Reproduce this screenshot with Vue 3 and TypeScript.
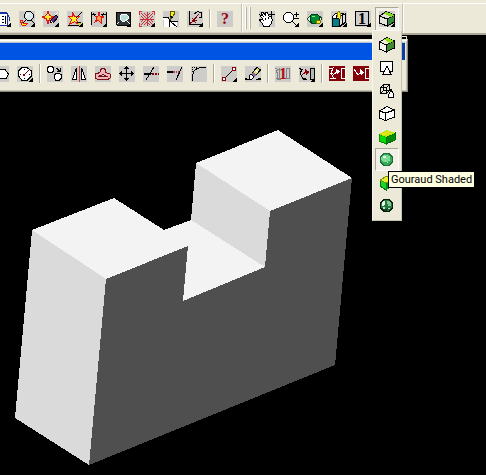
<script setup lang="ts">
import { ref } from 'vue'

/** One stroke or filled area of a 16x16 icon: path data, fill, stroke. */
type Shape = [d: string, fill: string, stroke?: string]

interface Tool {
  name: string
  plate?: boolean
  more?: boolean
  gap?: boolean
  glyph?: string
  glyphColor?: string
  shapes: Shape[]
}

const K = '#000'
const W = '#fff'
const N = 'none'
const R = '#e01818'
const D = '#850008'
const Y = '#ffee20'
const G = '#b8b8b8'

const star = 'M5.5 1.5L7.5 5.5L12.5 5.5L9.5 8.5L11.5 13.5L7.5 10.5L2.5 13.5L4.5 8.5L1.5 5.5H5.5Z'
const disc = 'M5 1.5H10L13.5 5V10L10 13.5H5L1.5 10V5Z'

const standardTools: Tool[] = [
  { name: 'Element attributes', more: true, shapes: [
    ['M1 2H12V14H1Z', W, '#1830a0'], ['M5 1H12V3H5Z', '#1830a0'],
    ['M6.5 5.5H8.5M6.5 8.5H8.5M6.5 11.5H8.5M10.5 5V13', N, K], ['M12.5 3.5L14.5 6.5V9.5', N, '#1830a0']] },
  { name: 'View element', plate: true, more: true, shapes: [
    ['M1 9L3 14H7L9 12H4L3 9Z', Y, R], ['M7.5 .5H11.5L14.5 3.5V6.5L11.5 9.5H8.5L5.5 6.5V3.5Z', '#dceaea', K],
    ['M8 3H10M7.5 4V6', N, W], ['M6.5 9.5L4 12M12 9L15 12', N, K]] },
  { name: 'Delete element', plate: true, more: true, shapes: [
    ['M5 .5L6.5 4.5L10.5 6L6.5 8L5 12.5L3.5 8L-.5 6L3.5 4.5Z', Y, R],
    ['M8 9L13 4L15 6L10 12L7 11Z', '#672888', K], ['M12 4L15 1', N, W], ['M8 10L10 12', N, W]] },
  { name: 'Create element', plate: true, more: true, shapes: [
    [star, Y, R], ['M15 1L9 7M1 14.5H12M10 11.5H14', N, K], ['M11 12H14V14H11Z', '#d8d020']] },
  { name: 'Dimension element', plate: true, more: true, shapes: [
    ['M.5 1V14M15 1V12M1 3.5H5M10 3.5H15M2 2L4 5M13 2L11 5', N, K],
    ['M8 1.5L9 5L13 6L10 7L10 12L7 9L4 11L6 7L4 5H7Z', '#ff9b42', R]] },
  { name: 'Fence preview', more: true, shapes: [
    ['M1 1H15V14H2L1 12Z', '#303638', K], ['M7 3H11L13 5V8L10 10H7L5 8V5Z', '#b9dfda', W],
    ['M4 11L2 13', N, W], ['M11 9L15 13', N, W]] },
  { name: 'Explode', plate: true, more: true, shapes: [
    ['M8 1V15M1 8H15M2 2L14 14M14 2L2 14M5 2L8 5L11 2M5 14L8 11L11 14M2 5L5 8L2 11M14 5L11 8L14 11', N, '#ce3038'],
    ['M0.5 1V4M3 .5H0M15.5 1V4M13 .5H16M.5 12V15.5H3', N, '#ce3038']] },
  { name: 'Place note', plate: true, shapes: [
    ['M0 7H6L8 11H14V16H1V11Z', W], ['M0 6.5H5L8 11L6 9V15.5M8 10.5H15M8 11L14 16', N, K],
    ['M7 5L8 0H11L12 2L9 7L7 9Z', Y, '#555500'], ['M7 5L10 7', N, K]] },
  { name: 'Measure angle', plate: true, more: true, shapes: [
    ['M2.5 0V13.5H15', N, K], ['M3 13L12 3M3 12L10 9M5 7L9 12', N, D],
    ['M7.5 3L10.5 .5L14.5 2V6M12 6H15', N, K]] },
  { name: 'Help', plate: true, gap: true, glyph: '?', glyphColor: '#9c0010', shapes: [] },
]

const viewTools: Tool[] = [
  { name: 'Pan view', plate: true, shapes: [
    ['M1 4L4 5L2 2L4 1L7 5L6 2L8 1L10 5L12 6L13.5 9L12 13L10 15.5H5L3 12L.5 9L2 8L4 9Z', W, K],
    ['M12.5 0V6M10 3.5H16', N, K], ['M6 7V9M9 6V8', N, K]] },
  { name: 'Zoom in or out', more: true, shapes: [
    ['M3.5 1.5H7.5L10.5 4.5V8.5L7.5 11.5H3.5L.5 8.5V4.5Z', W, K], ['M9 10L14 15', N, K],
    ['M13.5 1V6M11 3.5H16M11 7.5H16', N, K]] },
  { name: 'Rotate view', plate: true, more: true, shapes: [
    ['M0 8L3 5H13L15 8L12 12H4Z', '#e9eee9', '#174520'], ['M5 3H10L12 5V9L9 12H5L3 9V5Z', '#008c30', '#003814'],
    ['M5 5H8', N, '#6aff82'], ['M10 9H13L14 11L12 13L9 12Z', Y, '#7d7300']] },
  { name: 'Camera', plate: true, more: true, shapes: [
    ['M1 6L5 2H12L14 5V12L10 15H1Z', W, K], ['M1 7H8V15H1Z', '#087c83', K],
    ['M8 6L14 3V11L9 15Z', '#e2e2e2', K], ['M6 6V2L8 0L9 2V8', Y, '#8c8200'], ['M5 4V7M11 3V12', N, K]] },
  { name: 'View display mode 1', plate: true, more: true, glyph: '1', glyphColor: K, shapes: [
    ['M.5 .5H13.5V14.5H.5Z', '#cfcfcf', K]] },
]

const renderTool: Tool = { name: 'Render', plate: true, more: true, shapes: [
  ['M.5 5L8 8V15L.5 12Z', '#e4e4dc', K], ['M8 8L15.5 4V11L8 15Z', '#35883c', K],
  ['M.5 5L7 .5L15.5 4L8 8Z', '#dfe0d4', K], ['M5 2.5L7 .5L15.5 4L11.5 6Z', '#84d61c']] }

const manipulateTools: Tool[] = [
  { name: 'Place polygon', plate: true, shapes: [['M6 3.5H12L15.5 8L13.5 12.5H6L3 8Z', W, K]] },
  { name: 'Place circle', plate: true, more: true, shapes: [
    ['M5 1.5H10L14.5 5V10L10 14.5H5L1.5 10V5Z', W, K], ['M7 9L12 4', N, D], ['M6 8H8V10H6Z', D],
    ['M7.5 3V4M7.5 12V13M3 8.5H4M12 8.5H13', N, K]] },
  { name: 'Copy element', plate: true, gap: true, shapes: [
    ['M2 .5H5L6.5 2V5L5 6.5H2L.5 5V2Z', W, K], ['M9 7.5H12L14.5 9V12L12 14.5H9L7.5 12V9Z', W, K],
    ['M9 2L13 5M10 5.5H13.5V2', N, K]] },
  { name: 'Mirror element', plate: true, shapes: [
    ['M5.5 2V13.5H1.5Z', W, K], ['M10.5 2V13.5H14.5Z', W, K], ['M8 0V16', N, '#c43d43']] },
  { name: 'Move parallel', plate: true, shapes: [
    ['M5.5 4L7 2.5H9L10.5 4V6.5L15 8V12L13 13.5H3L.5 12V8L5 6.5Z', '#efb4b7', '#741018'],
    ['M3.5 10.5L8 8.5L12.5 10.5Z', '#cfcfcf', '#741018']] },
  { name: 'Move element', plate: true, shapes: [
    ['M7.5 1V15M1 7.5H15', N, K], ['M7.5 0L10 3H5ZM7.5 15L10 12H5ZM0 7.5L3 5V10ZM15 7.5L12 5V10Z', K]] },
  { name: 'Trim element', plate: true, shapes: [
    ['M1 7.5H9M3 14L11 1', N, K], ['M1 8.5H8', N, K], ['M9 7H11V9H9ZM12 7H14V9H12ZM15 7H16V9H15Z', D]] },
  { name: 'Extend to intersection', plate: true, shapes: [
    ['M0 5.5H6M0 6.5H6M9 14L15 1', N, K], ['M6 5H8V7H6ZM9 5H10V7H9ZM11 5H12V7H11Z', '#a83f45']] },
  { name: 'Construct fillet', plate: true, shapes: [
    ['M1.5 15V9L3 5L6 2.5L10 1.5H15', N, K], ['M1 1H2V2H1ZM3 1H4V2H3ZM5 1H6V2H5ZM1 3H2V4H1ZM1 5H2V6H1Z', K]] },
  { name: 'Modify element', plate: true, more: true, gap: true, shapes: [
    ['M4 12L12 4', N, K], ['M1.5 11.5H4.5V14.5H1.5Z', W, D], ['M11.5 1.5H14.5V4.5H11.5Z', W, D]] },
  { name: 'Partial delete', plate: true, shapes: [
    ['M0 13.5H4M11 13.5H16M0 12.5H2M13 12.5H16', N, K], ['M7 7L12 1.5L15.5 4L10 10Z', '#e9df5c', K],
    ['M6 8L8 6L11 9L9 11Z', '#8d6c98'], ['M4 10L6 8L9 11L7 13H4Z', W, K], ['M10 4L13 6', N, W]] },
  { name: 'Group 1', plate: true, gap: true, glyph: '1', glyphColor: '#b01018', shapes: [
    ['M1 5L4 3V12H2L3 8Z', N, '#858585'], ['M11.5 2.5H14.5V12.5H11.5Z', N, '#858585'],
    ['M0 2H2M1 4H3M2 13H6', N, '#858585']] },
  { name: 'Change group', plate: true, more: true, shapes: [
    ['M0 2L3 4L1 7L4 13H8M2 3H4M3 12H7', N, K], ['M11.5 2.5H15.5V13.5H11.5Z', G, K],
    ['M3 9L7 6', N, D], ['M6 3L11 6L7 9Z', D]] },
  { name: 'Attach reference', gap: true, shapes: [
    ['M0 0H16V15H0Z', D], ['M0 3L4 2L2 7L5 13M1 8L4 7M1 12H7', N, W],
    ['M4 9L8 6', N, W], ['M7 3L11 5L8 9Z', W], ['M12.5 2.5H16V12.5H12.5Z', D, W]] },
  { name: 'Move reference', shapes: [
    ['M0 0H16V15H0Z', D], ['M1 3L5 9L9 6', N, W], ['M7 3L11 6L8 9Z', W], ['M16 2.5H12.5V12.5H16', N, W]] },
]

const renderModes: Tool[] = [
  { name: 'Rendered view', shapes: [
    ['M.5 5L7 8V15L.5 12Z', '#f4f4ea', K], ['M7 8L15.5 4V11L7 15Z', '#3f8a30', K],
    ['M.5 5L8 .5L15.5 4L7 8Z', '#eff0d8', K], ['M5 2.5L8 .5L15.5 4L10.5 6Z', '#8fe010']] },
  { name: 'Cross section', shapes: [
    ['M1.5 1.5H13.5V11.5H1.5Z', W, K], ['M8 6L12 14.5H4Z', W, K], ['M8 6V8', N, K]] },
  { name: 'Wiremesh', shapes: [
    ['M1.5 4.5H7.5V10.5H1.5ZM4.5 1.5H10.5V7.5H4.5ZM1.5 4.5L4.5 1.5M7.5 4.5L10.5 1.5M1.5 10.5L4.5 7.5M7.5 10.5L10.5 7.5', N, K],
    ['M12 6.5L15 12L14 14.5H10L9.5 12Z', W, K]] },
  { name: 'Hidden line', shapes: [
    ['M.5 5L6.5 7V14.5L.5 12Z', W, K], ['M6.5 7L15.5 4V11L6.5 14.5Z', W, K], ['M.5 5L8 .5L15.5 4L6.5 7Z', W, K]] },
  { name: 'Filled hidden line', shapes: [
    ['M0 5L7 8V15L0 12Z', '#08dc08', '#168808'], ['M7 8L16 4V11L7 15Z', '#008b08', '#006b08'],
    ['M0 5L8 1L16 4L7 8Z', '#aeee00'], ['M3 4L10 7M6 3L13 5M3 6L11 2', N, '#f8df25']] },
  { name: 'Gouraud Shaded', shapes: [
    [disc, '#39a85c', '#187039'], ['M4 3H8L11 5V8L8 10H4L2 8V5Z', '#79da92'], ['M4 4H7V6H4Z', '#e7ffe9'],
    ['M6 8H7V9H6ZM8 6H9V7H8ZM10 8H11V9H10ZM8 10H9V11H8ZM10 4H11V5H10Z', '#9eeaad']] },
  { name: 'Phong Shaded', shapes: [
    ['M1 5L7 8V15L1 11Z', '#19d52c', '#096b13'], ['M7 8L15 4V11L7 15Z', '#008b22'], ['M1 5L8 1L15 4L7 8Z', '#e9eb32', '#779500']] },
  { name: 'Ray traced', shapes: [
    [disc, '#267740', '#021d0a'], ['M3 4L5 3H6V6L4 8H3Z', '#eaf6ea'],
    ['M8 3H10L12 5V8H9Z', '#7fc78e'], ['M3 10L6 11L10 10L8 13H5Z', '#123d20'],
    ['M4 9H6V11H4ZM9 10H11V11H9Z', '#b6e7bd']] },
]

const activeMode = ref('Gouraud Shaded')
</script>

<template>
  <main class="app">
    <header class="dock">
      <div class="bar bar-main" role="toolbar" aria-label="Standard">
        <button v-for="t in standardTools" :key="t.name" class="tool" :class="{ gap: t.gap }" :aria-label="t.name">
          <svg class="icon" :class="{ plate: t.plate }" viewBox="0 0 16 16">
            <path v-for="(s, i) in t.shapes" :key="i" :d="s[0]" :fill="s[1]" :stroke="s[2] ?? 'none'" />
            <text v-if="t.glyph" x="8" y="13" class="glyph" :fill="t.glyphColor">{{ t.glyph }}</text>
            <path v-if="t.more" d="M16 11V16H11Z" fill="#000" />
          </svg>
        </button>
      </div>
      <div class="bar bar-view" role="toolbar" aria-label="View control">
        <span class="grip"></span>
        <button v-for="t in viewTools" :key="t.name" class="tool" :aria-label="t.name">
          <svg class="icon" :class="{ plate: t.plate }" viewBox="0 0 16 16">
            <path v-for="(s, i) in t.shapes" :key="i" :d="s[0]" :fill="s[1]" :stroke="s[2] ?? 'none'" />
            <text v-if="t.glyph" x="7" y="13" class="glyph" :fill="t.glyphColor">{{ t.glyph }}</text>
            <path v-if="t.more" d="M16 11V16H11Z" fill="#000" />
          </svg>
        </button>
        <div class="split">
          <button class="tool pressed" :aria-label="renderTool.name" aria-haspopup="menu" aria-expanded="true">
            <svg class="icon plate" viewBox="0 0 16 16">
              <path v-for="(s, i) in renderTool.shapes" :key="i" :d="s[0]" :fill="s[1]" :stroke="s[2] ?? 'none'" />
              <path d="M16 11V16H11Z" fill="#000" />
            </svg>
          </button>
          <div class="flyout" role="menu" aria-label="Render modes">
            <div v-for="m in renderModes" :key="m.name" class="mode">
              <button
                class="tool mode-button"
                :class="{ pressed: m.name === activeMode }"
                role="menuitem"
                :aria-label="m.name"
                @click="activeMode = m.name"
              >
                <svg class="icon" viewBox="0 0 16 16">
                  <path v-for="(s, i) in m.shapes" :key="i" :d="s[0]" :fill="s[1]" :stroke="s[2] ?? 'none'" />
                </svg>
              </button>
              <span v-if="m.name === activeMode" class="tooltip" role="tooltip">{{ m.name }}</span>
            </div>
          </div>
        </div>
      </div>
    </header>

    <section class="palette">
      <div class="title"></div>
      <div class="palette-tools" role="toolbar" aria-label="Manipulate">
        <button v-for="t in manipulateTools" :key="t.name" class="tool" :class="{ gap: t.gap }" :aria-label="t.name">
          <svg class="icon" :class="{ plate: t.plate }" viewBox="0 0 16 16">
            <path v-for="(s, i) in t.shapes" :key="i" :d="s[0]" :fill="s[1]" :stroke="s[2] ?? 'none'" />
            <text v-if="t.glyph" x="8" y="13" class="glyph" :fill="t.glyphColor">{{ t.glyph }}</text>
            <path v-if="t.more" d="M16 11V16H11Z" fill="#000" />
          </svg>
        </button>
      </div>
    </section>

    <section class="view" aria-label="View 1">
      <svg class="model" viewBox="15 129 338 337" role="img" aria-label="Notched block">
        <path d="M32 230L106 279L89 465L15 418Z" fill="#dadada" />
        <path d="M106 279L188 246L183 301L265 267L270 211L352 178L335 365L89 465Z" fill="#4f4f4f" />
        <path d="M32 230L114 198L164 230L191 220L265 267L183 301L188 246L106 279Z" fill="#f3f3f3" />
        <path d="M196 163L270 211L265 267L191 220Z" fill="#dadada" />
        <path d="M196 163L278 130L352 178L270 211Z" fill="#f3f3f3" />
      </svg>
    </section>
  </main>
</template>

<style>
body {
  background: #000;
  overflow: hidden;
}
</style>

<style scoped>
.app {
  min-height: 100vh;
  display: flex;
  flex-direction: column;
  background: #000;
  font-family: Roboto, "Liberation Sans", sans-serif;
  font-size: 11px;
}

.dock {
  display: flex;
  padding-top: 3px;
  background: #ece9d8;
  border-bottom: 2px solid #aca899;
}

.bar {
  display: flex;
  padding: 3px 3px 1px 0;
  border-top: 1px solid #fff;
  border-right: 1px solid #c5c2b2;
  border-bottom: 1px solid #d6d2c2;
}

.bar-main {
  margin-left: -9px;
  padding-right: 4px;
}

.bar-view {
  border-left: 1px solid #fff;
  padding-left: 3px;
}

.dock::after {
  content: "";
  flex: 1;
  border-top: 1px solid #fff;
  border-left: 1px solid #fff;
}

.grip {
  width: 3px;
  height: 22px;
  margin: 0 4px 0 0;
  border: solid #b5b2a4;
  border-width: 0 1px;
  box-shadow: -1px 0 #fff, inset -1px 0 #fff;
}

.tool {
  flex: none;
  box-sizing: border-box;
  width: 24px;
  height: 24px;
  margin: 0;
  padding: 3px;
  border: 1px solid transparent;
  background: none;
  display: block;
}

.gap {
  position: relative;
  margin-left: 6px;
}

.gap::before {
  content: "";
  position: absolute;
  left: -5px;
  top: 1px;
  width: 1px;
  height: 19px;
  background: #aca899;
  box-shadow: 1px 0 #fff;
}

.pressed {
  border-color: #aca899 #fff #fff #aca899;
  background: #f2f0e6;
}

.icon {
  display: block;
  width: 16px;
  height: 16px;
  overflow: visible;
  shape-rendering: crispEdges;
}

.plate {
  background: #cdccc8;
}

.glyph {
  font: bold 16px "Liberation Serif", serif;
  text-anchor: middle;
}

.split {
  position: relative;
}

.flyout {
  position: absolute;
  z-index: 2;
  top: 23px;
  left: -3px;
  padding: 2px 2px 3px;
  background: #ece9d8;
  border: 1px solid;
  border-color: #f8f7f0 #c5c2b2 #c5c2b2 #f8f7f0;
}

.mode {
  position: relative;
}

.mode-button {
  height: 23px;
}

.tooltip {
  position: absolute;
  z-index: 3;
  top: 23px;
  left: 13px;
  padding: 0 2px;
  border: 1px solid #000;
  background: #ffffe1;
  color: #000;
  line-height: 15px;
  white-space: nowrap;
}

.palette {
  position: relative;
  margin: 4px 78px 0 0;
  background: #ece9d8;
  border-top: 1px solid #ece9d8;
  border-right: 1px solid #8d8b80;
  border-bottom: 1px solid #8d8b80;
  box-shadow: inset 0 1px #fff, inset -1px -1px #c5c2b2;
  padding: 3px 2px 3px 0;
}

.palette::after {
  content: "";
  position: absolute;
  right: 0;
  top: -4px;
  width: 4px;
  height: 3px;
  border: dashed #ece9d8;
  border-width: 1px 1px 0 0;
}

.title {
  height: 17px;
  background: linear-gradient(90deg, #0054e3 95%, #0a3a9c);
  box-shadow: 0 -1px #b8bfd8;
}

.palette-tools {
  display: flex;
  margin-left: -11px;
  padding: 2px 0;
}

.view {
  flex: 1;
  overflow: hidden;
}

.model {
  display: block;
  width: 338px;
  height: 337px;
  margin: 37px 0 0 15px;
  shape-rendering: crispEdges;
}
</style>
